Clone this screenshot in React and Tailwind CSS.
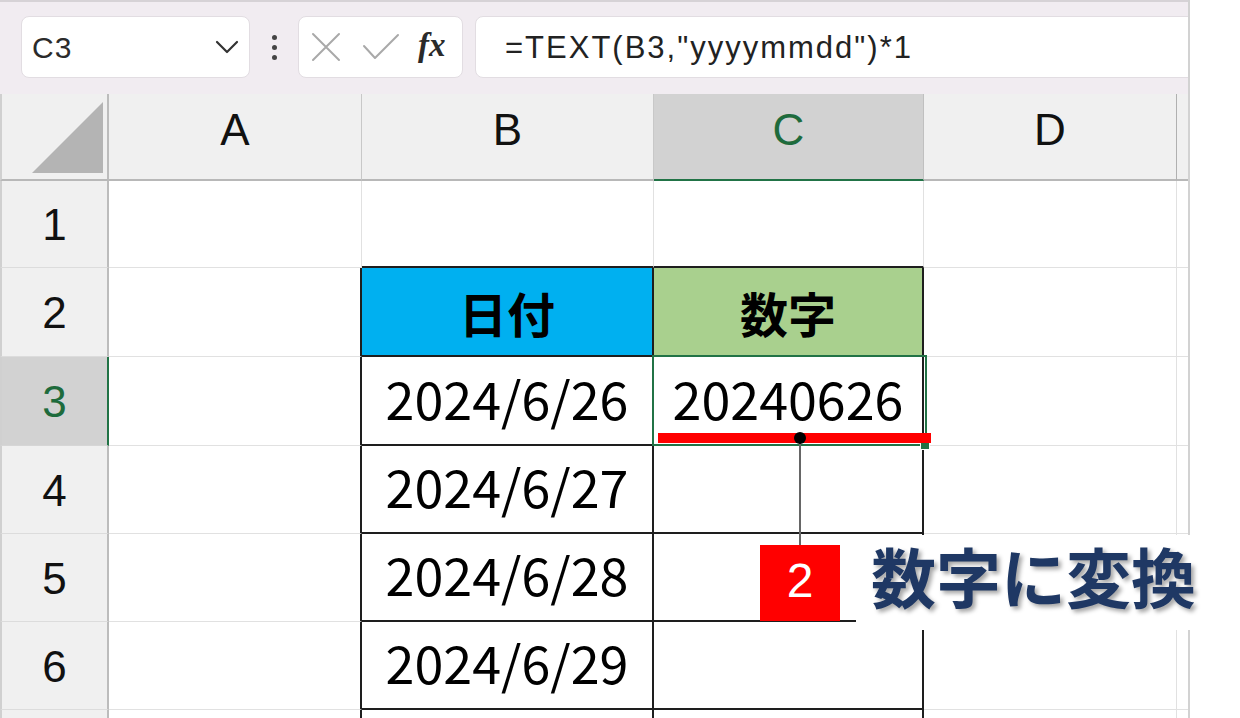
import React from "react";

const COLS = "grid grid-cols-[109px_253px_292px_270px_253px_11px]";
const JP = "font-['Noto_Sans_CJK_JP','Noto_Sans',sans-serif]";

const rows = [
  { n: 1, label: "1", h: "h-[87px]", b: "", c: "" },
  { n: 2, label: "2", h: "h-[89px]", b: "日付", c: "数字", head: true },
  { n: 3, label: "3", h: "h-[89px]", b: "2024/6/26", c: "20240626", sel: true },
  { n: 4, label: "4", h: "h-[88px]", b: "2024/6/27", c: "" },
  { n: 5, label: "5", h: "h-[88px]", b: "2024/6/28", c: "" },
  { n: 6, label: "6", h: "h-[88px]", b: "2024/6/29", c: "" },
  { n: 7, label: "", h: "h-[88px]", b: "", c: "" },
];

function RowHeader({ label, sel }) {
  return (
    <div
      className={
        sel
          ? "flex items-center justify-center bg-[#d2d2d2] border-l-2 border-l-[#d0d0d0] border-r-2 border-r-[#217346] border-b border-b-[#d6d6d6] text-[44px] leading-none text-[#1e6b3c] pt-[2px]"
          : "flex items-center justify-center bg-[#f0f0f0] border-l-2 border-l-[#d0d0d0] border-r-2 border-r-[#bcbcbc] border-b border-b-[#dcdcdc] text-[44px] leading-none text-[#111] pt-[2px]"
      }
    >
      {label}
    </div>
  );
}

function DataRow({ r }) {
  const inTable = r.n >= 2;
  return (
    <div className={`${COLS} ${r.h} shrink-0`}>
      <RowHeader label={r.label} sel={r.sel} />
      <div
        className={
          inTable
            ? "bg-white border-r-2 border-r-[#1e1e1e] border-b border-b-[#e1e1e1]"
            : "bg-white border-r border-r-[#e1e1e1] border-b border-b-[#e1e1e1]"
        }
      />
      <div
        className={
          r.head
            ? `flex items-center justify-center bg-[#00b0f0] border-r-2 border-r-[#1e1e1e] border-b-2 border-b-[#1e1e1e] ${JP} font-bold text-[48px] leading-none text-black`
            : inTable
            ? `flex items-center justify-center bg-white border-r-2 border-r-[#1e1e1e] border-b-2 border-b-[#1e1e1e] ${JP} text-[52px] leading-none text-black pb-[6px]`
            : "bg-white border-r border-r-[#e1e1e1] border-b-2 border-b-[#1e1e1e]"
        }
      >
        {r.b}
      </div>
      <div
        className={
          r.head
            ? `flex items-center justify-center bg-[#a9d08e] border-r-2 border-r-[#1e1e1e] border-b-2 border-b-[#1e1e1e] ${JP} font-bold text-[48px] leading-none text-black`
            : inTable
            ? `flex items-center justify-center bg-white border-r-2 border-r-[#1e1e1e] border-b-2 border-b-[#1e1e1e] ${JP} text-[52px] leading-none text-black pb-[6px]`
            : "bg-white border-r border-r-[#e1e1e1] border-b-2 border-b-[#1e1e1e]"
        }
      >
        {r.c}
      </div>
      <div className="bg-white border-r border-r-[#e1e1e1] border-b border-b-[#e1e1e1]" />
      <div className="bg-white border-b border-b-[#e1e1e1]" />
    </div>
  );
}

function Toolbar() {
  return (
    <div className="h-[94px] shrink-0 bg-[#f1ecf1] border-t-2 border-t-[#d6d2d6] flex items-start pt-[14px] pl-[21px] overflow-hidden">
      <div className="w-[229px] h-[62px] shrink-0 bg-white rounded-[8px] border border-[#e2dde2] flex items-center justify-between pl-[10px] pr-[10px]">
        <span className="text-[30px] leading-none tracking-[1px] text-[#2b2b2b] pt-[2px]">C3</span>
        <svg width="24" height="14" viewBox="0 0 24 14" fill="none">
          <path d="M2 2 L12 12 L22 2" stroke="#333" strokeWidth="2.2" strokeLinecap="round" strokeLinejoin="round" />
        </svg>
      </div>
      <div className="w-[48px] h-[62px] shrink-0 flex flex-col items-center justify-center gap-[5px]">
        <span className="w-[5px] h-[5px] rounded-full bg-[#444]" />
        <span className="w-[5px] h-[5px] rounded-full bg-[#444]" />
        <span className="w-[5px] h-[5px] rounded-full bg-[#444]" />
      </div>
      <div className="w-[165px] h-[62px] shrink-0 bg-white rounded-[8px] border border-[#e2dde2] flex items-center pl-[12px]">
        <svg width="30" height="30" viewBox="0 0 30 30" fill="none">
          <path d="M2 2 L28 28 M28 2 L2 28" stroke="#a9a9a9" strokeWidth="2" strokeLinecap="round" />
        </svg>
        <svg className="ml-[21px]" width="38" height="28" viewBox="0 0 38 28" fill="none">
          <path d="M2 13 L13 25 L36 2" stroke="#a9a9a9" strokeWidth="2" strokeLinecap="round" strokeLinejoin="round" />
        </svg>
        <span className="ml-[18px] font-['Liberation_Serif',serif] italic font-bold text-[33px] leading-none text-[#2a2a2a] pb-[4px]">
          fx
        </span>
      </div>
      <div className="ml-[12px] w-[740px] h-[62px] shrink-0 bg-white rounded-[8px] border border-[#e2dde2] flex items-center pl-[29px]">
        <span className="text-[31px] leading-none tracking-[2px] text-[#222]">=TEXT(B3,"yyyymmdd")*1</span>
      </div>
    </div>
  );
}

function HeaderRow() {
  return (
    <div className={`${COLS} h-[87px] shrink-0`}>
      <div className="relative bg-[#f0f0f0] border-l-2 border-l-[#d0d0d0] border-r-2 border-r-[#bcbcbc] border-b-2 border-b-[#b8b8b8]">
        <svg className="absolute left-0 top-0" width="109" height="87" viewBox="0 0 109 87">
          <polygon points="30,79 101,79 101,8" fill="#b4b4b4" />
        </svg>
      </div>
      <div className="flex items-center justify-center bg-[#f0f0f0] border-r border-r-[#c8c8c8] border-b-2 border-b-[#b8b8b8] text-[44px] leading-none text-[#111] pb-[14px]">
        A
      </div>
      <div className="flex items-center justify-center bg-[#f0f0f0] border-r border-r-[#c8c8c8] border-b-2 border-b-[#b8b8b8] text-[44px] leading-none text-[#111] pb-[14px]">
        B
      </div>
      <div className="flex items-center justify-center bg-[#d2d2d2] border-r border-r-[#c0c0c0] border-b-2 border-b-[#217346] text-[44px] leading-none text-[#1e6b3c] pb-[14px]">
        C
      </div>
      <div className="flex items-center justify-center bg-[#f0f0f0] border-r border-r-[#b0b0b0] border-b-2 border-b-[#b8b8b8] text-[44px] leading-none text-[#111] pb-[14px]">
        D
      </div>
      <div className="bg-[#f0f0f0] border-b-2 border-b-[#b8b8b8]" />
    </div>
  );
}

export default function App() {
  return (
    <div className="relative w-[1240px] h-[718px] overflow-hidden bg-white font-['Liberation_Sans',sans-serif]">
      <div className="w-[1190px] h-full border-r-2 border-r-[#d2d2d2] flex flex-col overflow-hidden">
        <Toolbar />
        <HeaderRow />
        {rows.map((r) => (
          <DataRow key={r.n} r={r} />
        ))}
      </div>

      {/* selection */}
      <div className="absolute left-[652px] top-[355px] w-[275px] h-[91px] border-2 border-[#217346]" />
      <div className="absolute left-[920px] top-[440px] w-[10px] h-[10px] bg-[#217346] border border-white" />

      {/* annotation */}
      <div className="absolute left-[658px] top-[433px] w-[273px] h-[10px] bg-[#ff0000]" />
      <div className="absolute left-[799px] top-[438px] w-[2px] h-[107px] bg-[#666]" />
      <div className="absolute left-[794px] top-[432px] w-[12px] h-[12px] rounded-full bg-black" />
      <div className="absolute left-[856px] top-[535px] w-[384px] h-[95px] bg-white pl-[15px] pt-[8px]">
        <span className={`${JP} font-bold text-[65px] leading-none text-[#1f3864] [text-shadow:3px_3px_4px_rgba(0,0,0,0.35)] whitespace-nowrap`}>
          数字に変換
        </span>
      </div>
      <div className="absolute left-[760px] top-[545px] w-[80px] h-[76px] bg-[#ff0000] flex items-center justify-center text-[48px] leading-none text-white pb-[4px]">
        2
      </div>
    </div>
  );
}
